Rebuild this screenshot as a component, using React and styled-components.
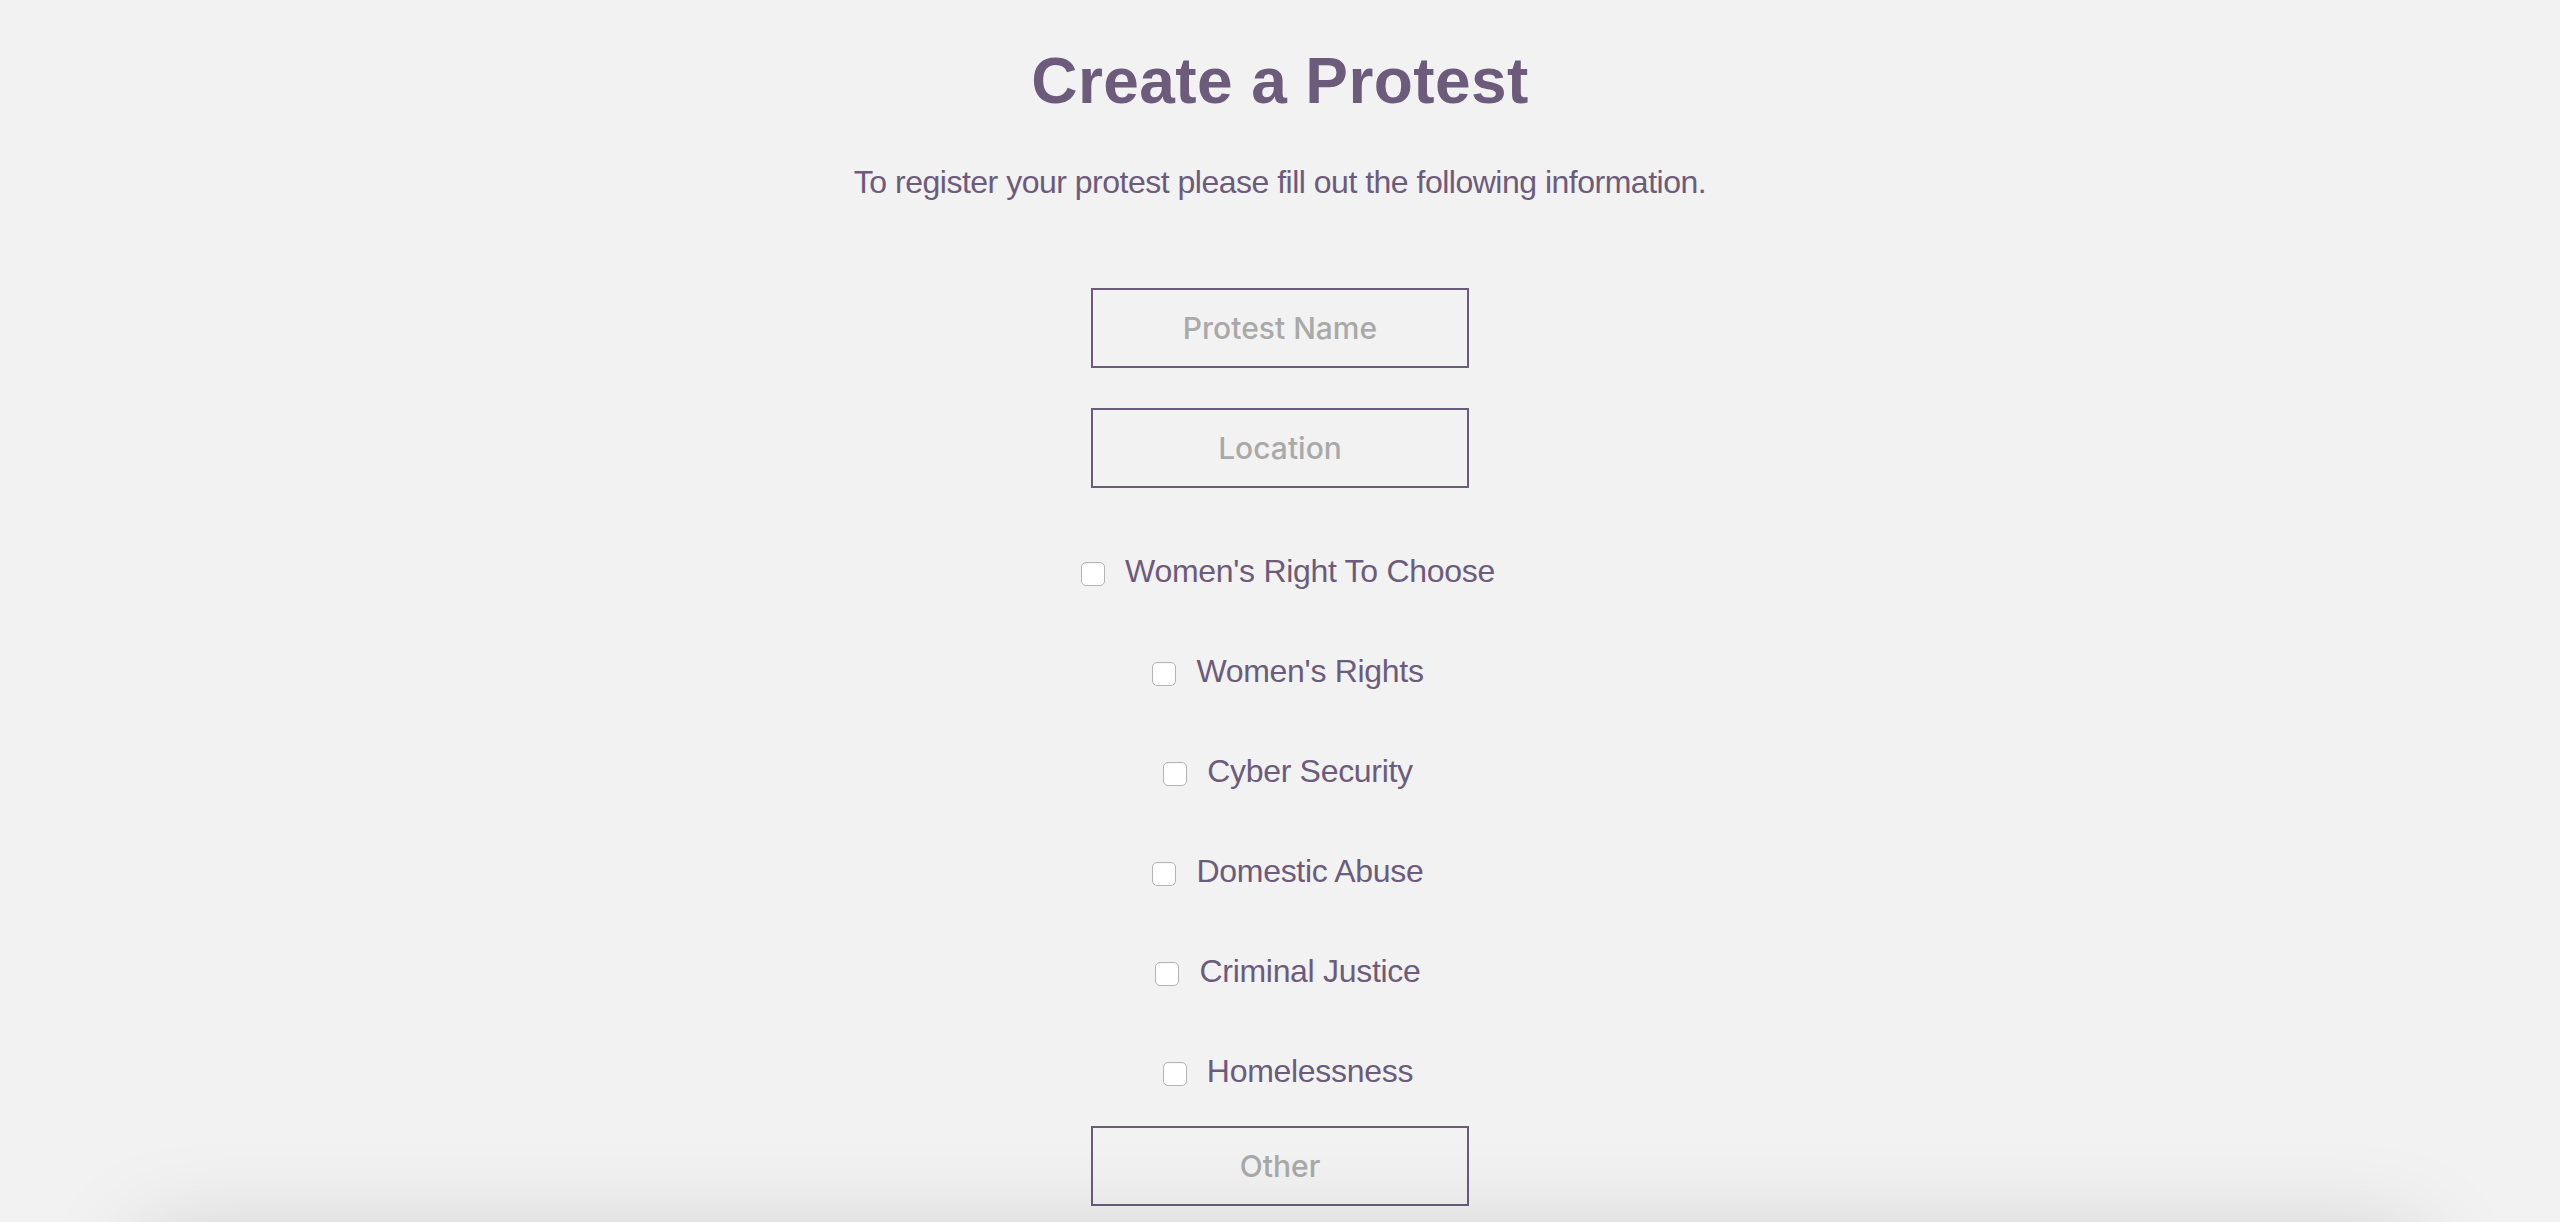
import React from 'react';
import styled, { createGlobalStyle } from 'styled-components';

const purple = "#6c5b7b";
const bg = "#f2f2f2";
const placeholderGrey = "#a9a9a9";

const GlobalStyle = createGlobalStyle`
    html, body {
        margin: 0;
        padding: 0;
        background: ${bg};
    }
    body {
        font-family: "Liberation Sans", Arial, Helvetica, sans-serif;
        color: ${purple};
    }
`;

const Page = styled.div`
    display: flex;
    flex-direction: column;
    align-items: center;
    padding-top: 45px;
    overflow: hidden;
`;

const Title = styled.h1`
    margin: 0;
    font-size: 64px;
    line-height: 72px;
    font-weight: 700;
    letter-spacing: 0.4px;
    color: ${purple};
`;

const Intro = styled.p`
    margin: 47px 0 0 0;
    font-size: 32px;
    line-height: 36px;
    letter-spacing: -0.5px;
    color: ${purple};
`;

const Form = styled.form`
    display: flex;
    flex-direction: column;
    align-items: center;
    margin-top: 88px;
`;

const TextField = styled.input`
    box-sizing: border-box;
    width: 378px;
    height: 80px;
    margin: ${p => p.$top || 0}px 0 0 0;
    padding: 0 12px;
    border: 2px solid ${purple};
    border-radius: 0;
    background: transparent;
    font-family: Inter, "Open Sans", sans-serif;
    font-size: 30px;
    font-weight: 500;
    text-align: center;
    color: ${purple};
    outline: none;

    &::placeholder {
        color: ${placeholderGrey};
    }
`;

const Causes = styled.div`
    display: flex;
    flex-direction: column;
    margin-top: 33px;
`;

const CheckRow = styled.label`
    display: flex;
    align-items: center;
    justify-content: center;
    height: 100px;
    padding-left: 16px;
    font-size: 32px;
    line-height: 36px;
    letter-spacing: -0.3px;
    color: ${purple};
    cursor: pointer;
`;

const Box = styled.input.attrs({ type: 'checkbox' })`
    appearance: none;
    -webkit-appearance: none;
    box-sizing: border-box;
    width: 24px;
    height: 24px;
    margin: 6px 20px 0 0;
    border: 1.5px solid #b3b3b3;
    border-radius: 5px;
    background: #ffffff;
    box-shadow: inset 0 1px 1px rgba(0, 0, 0, 0.04);
`;

// section below the fold, only its shadow shows in view
const Panel = styled.div`
    align-self: stretch;
    margin: 34px 140px 0 140px;
    height: 500px;
    background: ${bg};
    box-shadow: 0 0 100px rgba(0, 0, 0, 0.17);
    border-radius: 12px;
`;

const causes = [
    "Women's Right To Choose",
    "Women's Rights",
    "Cyber Security",
    "Domestic Abuse",
    "Criminal Justice",
    "Homelessness",
];

export default function App() {
    return (
        <>
            <GlobalStyle />
            <Page>
                <Title>Create a Protest</Title>
                <Intro>To register your protest please fill out the following information.</Intro>
                <Form onSubmit={e => e.preventDefault()}>
                    <TextField placeholder="Protest Name" />
                    <TextField $top={40} placeholder="Location" />
                    <Causes>
                        {causes.map(c => (
                            <CheckRow key={c}>
                                <Box />
                                {c}
                            </CheckRow>
                        ))}
                    </Causes>
                    <TextField $top={5} placeholder="Other" />
                </Form>
                <Panel />
            </Page>
        </>
    );
}
